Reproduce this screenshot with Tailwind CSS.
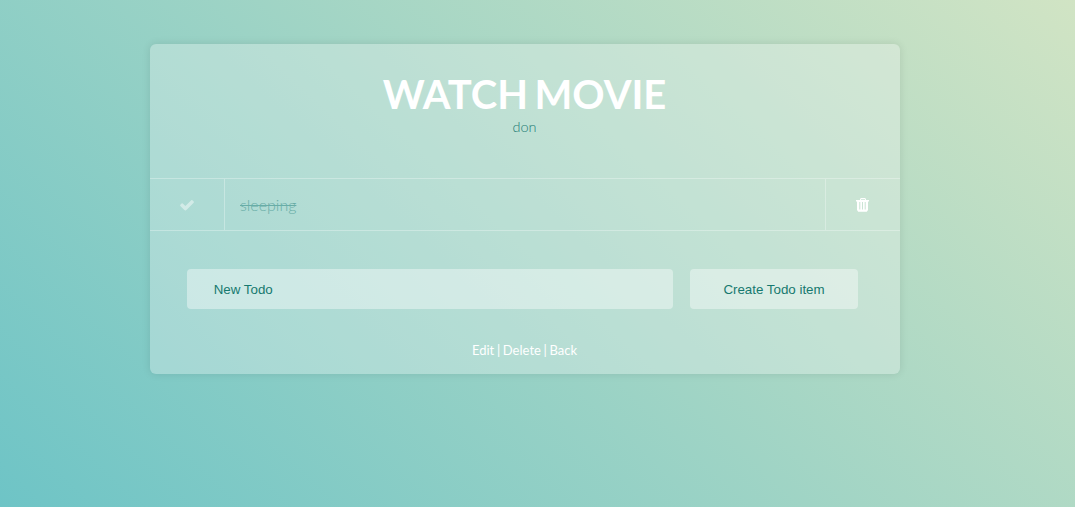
<!DOCTYPE html>
<html lang="en"><head><meta charset="utf-8"><title>Todo</title>
<script src="https://cdn.jsdelivr.net/npm/@tailwindcss/browser@4"></script></head>
<body class="h-[507px] overflow-hidden bg-[linear-gradient(43deg,#6ec4c6_0%,#d1e4c4_100%)] pt-11 pl-[150px] font-['Lato',sans-serif]">
<main class="flex h-[330px] w-[750px] flex-col rounded-md bg-[#fafafa]/30 shadow-[0_0_8px_rgba(0,0,0,0.10)]">
<header class="h-[134px] pt-[25px] pr-px text-center">
<h1 class="text-[40px] leading-[50px] font-bold [word-spacing:-3.3px] text-white">WATCH MOVIE</h1>
<p class="text-[14.5px] leading-[15px] font-light text-[#1f7d76]">don</p>
</header>
<section class="flex h-[53px] border-y border-white/30">
<div class="flex w-[75px] items-center justify-center border-r border-white/30 pr-px text-white/45"><svg class="h-4 w-4" viewBox="0 0 1792 1792" fill="currentColor"><path d="M1671 566q0 40-28 68l-724 724-136 136q-28 28-68 28t-68-28l-136-136-362-362q-28-28-28-68t28-68l136-136q28-28 68-28t68 28l294 295 656-657q28-28 68-28t68 28l136 136q28 28 28 68z"/></svg></div>
<p class="flex-1 pl-[15px] text-base leading-[52px] font-light text-[#68ada7] line-through">sleeping</p>
<div class="flex w-[75px] items-center justify-center border-l border-white/30 pr-px text-white"><svg class="h-4 w-4" viewBox="0 0 16 16" fill="currentColor"><path fill-rule="evenodd" d="M1 3h4V2l1-1h4l1 1v1h3v1.4h-1V13l-1.2 1.8H3.2L2 13V4.400H1zM6 2.200V3h4v-.8zM4.300 5v7.600h1V5zM7 5v7.600h1V5zM9.700 5v7.600h1V5z"/></svg></div>
</section>
<form class="flex gap-[17px] pt-[38px] pl-[37px] font-['Liberation_Sans',sans-serif] text-[13.333px] text-[#16796f]">
<div class="h-10 w-[486px] rounded bg-white/40 pl-[26.7px] leading-[42px]">New Todo</div>
<button type="button" class="h-10 w-[168px] rounded bg-white/40 pt-0.5">Create Todo item</button>
</form>
<nav class="pt-[31px] pr-px text-center text-[13px] leading-5 [word-spacing:-0.65px] text-white">Edit | Delete | Back</nav>
</main></body></html>
